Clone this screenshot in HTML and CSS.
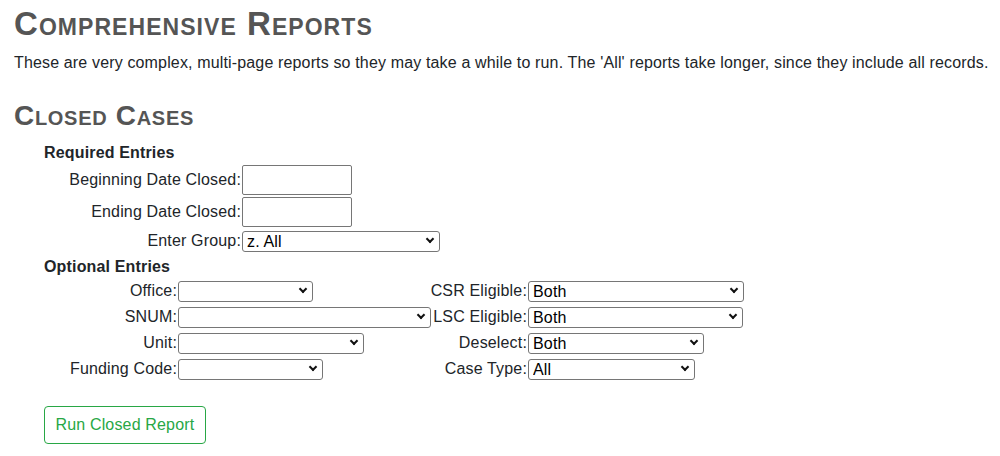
FILE: index.html
```html
<!DOCTYPE html>
<html lang="en">
<head>
<meta charset="utf-8">
<title>Comprehensive Reports</title>
<link rel="stylesheet" href="styles.css">
</head>
<body>
<h1 class="page-title">Comprehensive Reports</h1>
<p class="intro">These are very complex, multi-page reports so they may take a while to run. The 'All' reports take longer, since they include all records.</p>

<h2 class="section-title">Closed Cases</h2>
<form class="report-form">
  <div class="group-title">Required Entries</div>
  <div class="req-grid">
    <label class="lbl" for="bdc">Beginning Date Closed:</label>
    <input class="date-input" id="bdc" type="text">
    <label class="lbl" for="edc">Ending Date Closed:</label>
    <input class="date-input" id="edc" type="text">
    <label class="lbl" for="grp">Enter Group:</label>
    <span class="sel"><select id="grp" class="w-group"><option>z. All</option></select></span>
  </div>

  <div class="group-title group-title--opt">Optional Entries</div>
  <div class="opt-grid">
    <label class="lbl" for="office">Office:</label>
    <span class="sel"><select id="office" class="w-office"><option></option></select></span>
    <label class="lbl" for="csr">CSR Eligible:</label>
    <span class="sel"><select id="csr" class="w-csr"><option>Both</option></select></span>

    <label class="lbl" for="snum">SNUM:</label>
    <span class="sel"><select id="snum" class="w-snum"><option></option></select></span>
    <label class="lbl" for="lsc">LSC Eligible:</label>
    <span class="sel"><select id="lsc" class="w-lsc"><option>Both</option></select></span>

    <label class="lbl" for="unit">Unit:</label>
    <span class="sel"><select id="unit" class="w-unit"><option></option></select></span>
    <label class="lbl" for="desel">Deselect:</label>
    <span class="sel"><select id="desel" class="w-desel"><option>Both</option></select></span>

    <label class="lbl" for="fund">Funding Code:</label>
    <span class="sel"><select id="fund" class="w-fund"><option></option></select></span>
    <label class="lbl" for="ctype">Case Type:</label>
    <span class="sel"><select id="ctype" class="w-case"><option>All</option></select></span>
  </div>

  <button type="button" class="btn-run">Run Closed Report</button>
</form>
</body>
</html>
```

FILE: styles.css
```css
body {
  margin: 0;
  padding: 5px 14px 0;
  font-family: "Liberation Sans", Arial, Helvetica, sans-serif;
  font-size: 16px;
  line-height: 24px;
  letter-spacing: 0.16px;
  color: #212529;
  background: #fff;
}

.page-title {
  margin: 0;
  font-size: 33px;
  line-height: 38px;
  font-weight: bold;
  font-variant: small-caps;
  letter-spacing: 1.05px;
  color: #555;
}

.intro {
  margin: 8px 0 0;
  letter-spacing: 0.15px;
  white-space: nowrap;
}

.section-title {
  margin: 24px 0 0;
  font-size: 28px;
  line-height: 34px;
  font-weight: bold;
  font-variant: small-caps;
  letter-spacing: 0.7px;
  color: #555;
}

.report-form {
  margin: 8px 0 0;
  padding-left: 30px;
}

.group-title {
  font-weight: bold;
}

.group-title--opt {
  margin-top: 2px;
}

.req-grid {
  display: grid;
  grid-template-columns: 198px auto;
  row-gap: 2px;
  align-items: center;
  justify-items: start;
}

.opt-grid {
  display: grid;
  grid-template-columns: 134px 259px 91px auto;
  row-gap: 2px;
  align-items: center;
  justify-items: start;
}

.lbl {
  justify-self: end;
  padding-right: 1px;
  white-space: nowrap;
}

.date-input {
  box-sizing: border-box;
  width: 110px;
  height: 30px;
  margin: 0;
  padding: 0 4px;
  border: 1px solid #767676;
  border-radius: 2px;
  font: 16px "Liberation Sans", Arial, sans-serif;
  background: #fff;
}

.sel {
  position: relative;
  display: flex;
}

.sel::after {
  content: "";
  position: absolute;
  right: 7px;
  top: 5px;
  width: 4px;
  height: 4px;
  border-right: 2.2px solid #111;
  border-bottom: 2.2px solid #111;
  transform: rotate(45deg);
  pointer-events: none;
}

.sel select {
  -webkit-appearance: none;
  appearance: none;
  box-sizing: border-box;
  height: 21px;
  margin: 0;
  padding: 0 20px 0 4px;
  border: 1px solid #767676;
  border-radius: 3px;
  background: #fff;
  color: #000;
  font: 16px "Liberation Sans", Arial, sans-serif;
  letter-spacing: 0.16px;
  line-height: 19px;
}

.w-group { width: 198px; }
.w-office { width: 135px; }
.w-snum { width: 253px; }
.w-unit { width: 186px; }
.w-fund { width: 145px; }
.w-csr { width: 216px; }
.w-lsc { width: 215px; }
.w-desel { width: 176px; }
.w-case { width: 167px; }

.btn-run {
  display: block;
  margin-top: 25px;
  height: 38px;
  padding: 6px 10.5px;
  border: 1px solid #28a745;
  border-radius: 4px;
  background: #fff;
  color: #28a745;
  font: 16px "Liberation Sans", Arial, sans-serif;
  letter-spacing: 0.16px;
  line-height: 24px;
  white-space: nowrap;
}
```
